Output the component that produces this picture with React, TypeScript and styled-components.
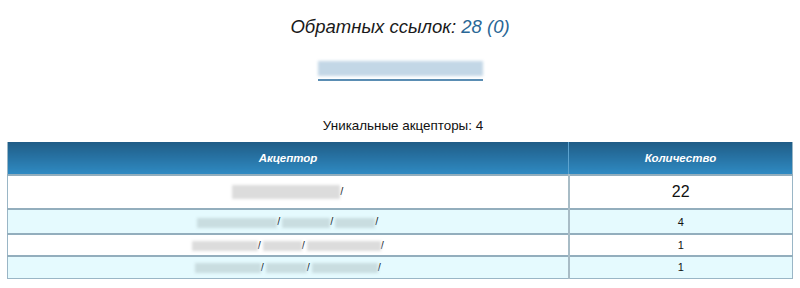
import styled, { createGlobalStyle } from "styled-components";

const GlobalStyle = createGlobalStyle`
    body {
        margin: 0;
        background: #fff;
        font-family: "Liberation Sans", Arial, sans-serif;
        color: #111;
    }
`;

const Page = styled.div`
    padding: 0 7px;
`;

const Title = styled.h2`
    margin: 0;
    padding-top: 15px;
    text-align: center;
    font-size: 18.5px;
    font-weight: normal;
    font-style: italic;
    line-height: 24px;
    color: #1a1a1a;

    span {
        color: #2a6796;
    }
`;

const SiteLink = styled.a`
    display: block;
    width: 165px;
    margin: 20px auto 0;
    padding-bottom: 2px;
    border-bottom: 2px solid #5a8db3;
`;

const Blur = styled.span<{ $w: number; $tone?: string; $h?: number }>`
    display: inline-block;
    vertical-align: middle;
    width: ${(p) => p.$w}px;
    height: ${(p) => p.$h ?? 11}px;
    background: ${(p) => p.$tone ?? "#d6d6d6"};
    filter: blur(1.5px);
`;

const Summary = styled.p`
    margin: 37px 0 0;
    padding-left: 6px;
    text-align: center;
    font-size: 13.4px;
    line-height: 16px;
`;

const Table = styled.table`
    width: 786px;
    margin-top: 8px;
    border-collapse: collapse;
    border: 1px solid #9ab6c6;
    border-top: none;
`;

const Th = styled.th`
    height: 33px;
    box-sizing: border-box;
    padding: 0;
    background: linear-gradient(#1f5c86, #2f8ac2);
    color: #fff;
    font-size: 11.5px;
    font-weight: bold;
    font-style: italic;
    border-left: 1px solid #5da3cf;
    &:first-child {
        border-left: none;
    }
`;

const Row = styled.tr<{ $alt?: boolean }>`
    background: ${(p) => (p.$alt ? "#e5fafe" : "#fff")};
    border-top: 2px solid #93aebd;
`;

const Td = styled.td<{ $big?: boolean; $h: number }>`
    height: ${(p) => p.$h}px;
    box-sizing: border-box;
    padding: 0;
    text-align: center;
    font-size: ${(p) => (p.$big ? 16 : 11)}px;
    border-left: 2px solid #a8bcc6;
    &:first-child {
        border-left: none;
    }
`;

const Path = styled.span`
    display: inline-flex;
    align-items: center;
    gap: 2px;
    font-size: 11px;
`;

type Acceptor = { parts: number[]; count: number; h: number };

const rows: Acceptor[] = [
    { parts: [108], count: 22, h: 34 },
    { parts: [80, 48, 40], count: 4, h: 25 },
    { parts: [66, 39, 74], count: 1, h: 22 },
    { parts: [66, 41, 66], count: 1, h: 22 },
];

const App = () => (
    <>
        <GlobalStyle />
        <Page>
            <Title>
                Обратных ссылок: <span>28 (0)</span>
            </Title>
            <SiteLink href="#">
                <Blur $w={165} $h={15} $tone="#c3d7e6" />
            </SiteLink>
            <Summary>Уникальные акцепторы: 4</Summary>
            <Table>
                <thead>
                    <tr>
                        <Th style={{ width: 561 }}>Акцептор</Th>
                        <Th>Количество</Th>
                    </tr>
                </thead>
                <tbody>
                    {rows.map((r, i) => (
                        <Row key={i} $alt={i % 2 === 1}>
                            <Td $h={r.h}>
                                <Path>
                                    {r.parts.map((w, j) => (
                                        <span key={j}>
                                            <Blur $w={w} $h={r.h > 30 ? 14 : 10} $tone={i % 2 ? "#c9dde0" : "#dcdcdc"} />
                                            /
                                        </span>
                                    ))}
                                </Path>
                            </Td>
                            <Td $h={r.h} $big={i === 0}>
                                {r.count}
                            </Td>
                        </Row>
                    ))}
                </tbody>
            </Table>
        </Page>
    </>
);

export default App;
